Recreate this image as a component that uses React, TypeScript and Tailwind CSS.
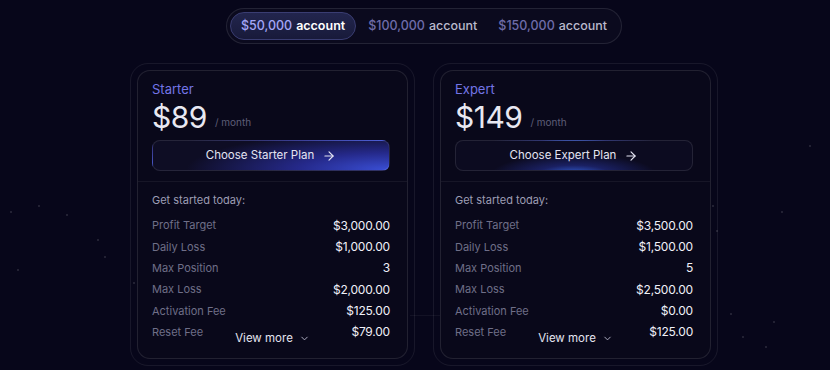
import { ArrowRight, ChevronDown } from "lucide-react"

const plans = [
  {
    name: "Starter",
    price: "$89",
    button: "Choose Starter Plan",
    glow: "bg-[radial-gradient(ellipse_110%_170%_at_100%_100%,#3a4fd6_0%,#25298a_35%,#0e0d24_78%)]",
    rows: [
      ["Profit Target", "$3,000.00"],
      ["Daily Loss", "$1,000.00"],
      ["Max Position", "3"],
      ["Max Loss", "$2,000.00"],
      ["Activation Fee", "$125.00"],
      ["Reset Fee", "$79.00"],
    ],
  },
  {
    name: "Expert",
    price: "$149",
    button: "Choose Expert Plan",
    glow: "bg-[radial-gradient(ellipse_35%_70%_at_50%_115%,#3360d8_0%,#1a2062_45%,#0c0b20_100%)]",
    rows: [
      ["Profit Target", "$3,500.00"],
      ["Daily Loss", "$1,500.00"],
      ["Max Position", "5"],
      ["Max Loss", "$2,500.00"],
      ["Activation Fee", "$0.00"],
      ["Reset Fee", "$125.00"],
    ],
  },
]

// faint star dots in the backdrop
const dots = [
  [10, 211], [38, 205], [66, 214], [97, 239], [104, 256], [17, 269], [133, 282],
  [809, 145], [781, 211], [712, 205], [716, 230], [730, 313], [773, 321], [742, 336], [765, 346],
]

function Tabs() {
  return (
    <div className="flex items-center h-[36px] rounded-full border border-white/10 bg-[#0b0a1e] p-[3px] pr-[14px] text-[12.5px] font-medium">
      <div className="flex items-center h-[28px] px-[10px] rounded-full border border-[#3a3d72] bg-[linear-gradient(180deg,#22254d,#181a3a)]">
        <span className="text-[#a3a6f7]">$50,000</span>
        <span className="ml-[4px] text-white font-semibold">account</span>
      </div>
      <div className="flex items-center ml-[12px]">
        <span className="text-[#6e6caa]">$100,000</span>
        <span className="ml-[4px] text-[#b9b9cc]">account</span>
      </div>
      <div className="flex items-center ml-[21px]">
        <span className="text-[#6e6caa]">$150,000</span>
        <span className="ml-[4px] text-[#b9b9cc]">account</span>
      </div>
    </div>
  )
}

function PlanCard({ plan }: { plan: (typeof plans)[number] }) {
  return (
    <div className="w-[285px] h-[303px] rounded-[18px] border border-white/[0.07] p-[6px]">
      <div className="relative h-[289px] rounded-[13px] border border-white/10 bg-[#09081a]">
        <div className="pl-[14px] pr-[17px] pt-[10px] pb-[10px] border-b border-white/[0.06]">
          <div className="text-[13px] leading-[16px] text-[#7375e6]">{plan.name}</div>
          <div className="flex items-end mt-[5px] h-[30px]">
            <span className="text-[30px] leading-[30px] text-[#e8e8f2] tracking-[-0.5px]">{plan.price}</span>
            <span className="ml-[8px] mb-[2px] text-[10px] text-[#5e5e78]">/ month</span>
          </div>
          <div
            className={`mt-[8px] h-[31px] rounded-[8px] border border-white/10 flex items-center justify-center gap-[8px] text-[11.5px] text-[#e4e4f2] ${plan.glow}`}
          >
            {plan.button}
            <ArrowRight size={14} strokeWidth={2} />
          </div>
        </div>
        <div className="pl-[14px] pr-[17px] pt-[10px]">
          <div className="text-[11px] leading-[16px] text-[#9d9db4]">Get started today:</div>
          <div className="mt-[7px] flex flex-col">
            {plan.rows.map(([label, value]) => (
              <div key={label} className="flex items-center justify-between h-[21.3px]">
                <span className="text-[11px] text-[#6f6f88]">{label}</span>
                <span className="text-[12px] tracking-[-0.2px] text-[#f0f0f8]">{value}</span>
              </div>
            ))}
          </div>
          <div className="absolute left-0 right-0 bottom-[11px] flex justify-center items-center gap-[6px] text-[11.5px] text-[#e4e4f0]">
            View more
            <ChevronDown size={11} strokeWidth={2} className="text-[#b8b8cc]" />
          </div>
        </div>
      </div>
    </div>
  )
}

export default function App() {
  return (
    <div
      className="relative w-full h-[370px] overflow-hidden bg-[#07061a] flex flex-col items-center pl-[18px]"
      style={{ fontFamily: "Inter, 'Noto Sans', sans-serif" }}
    >
      {dots.map(([x, y], i) => (
        <div
          key={i}
          className="absolute w-[2px] h-[2px] rounded-full bg-white/15"
          style={{ left: x, top: y }}
        />
      ))}
      <div className="absolute left-[410px] top-[315px] w-[30px] h-px bg-white/[0.05]" />
      <div className="mt-[8px] leading-none">
        <Tabs />
      </div>
      <div className="mt-[19px] flex gap-[18px]">
        {plans.map((p) => (
          <PlanCard key={p.name} plan={p} />
        ))}
      </div>
    </div>
  )
}
